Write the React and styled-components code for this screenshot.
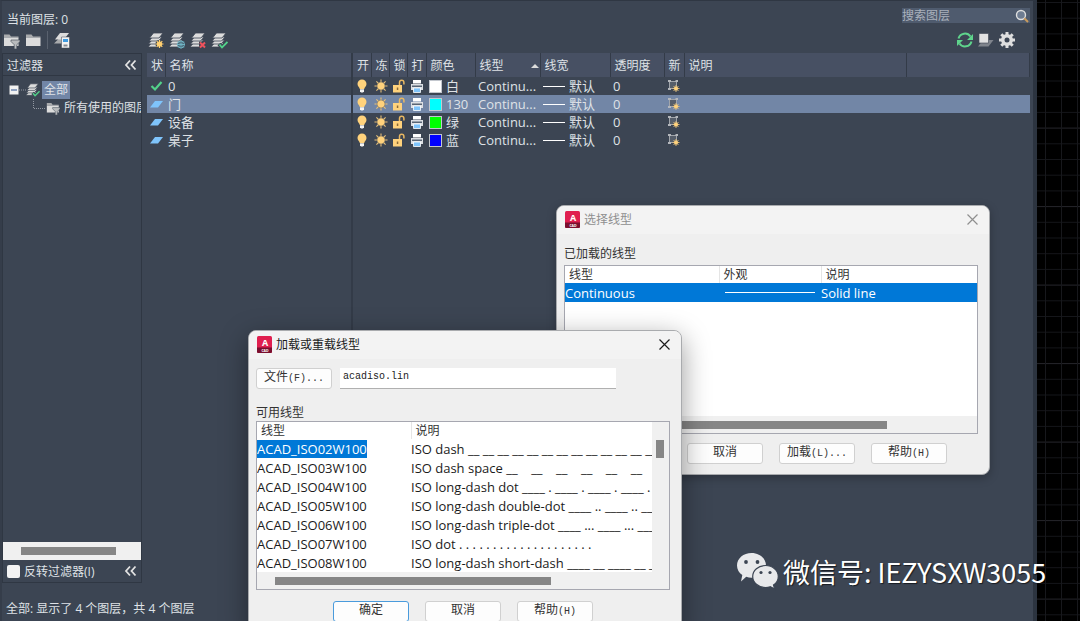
import React from 'react';
import styled, { createGlobalStyle } from 'styled-components';

const GlobalStyle = createGlobalStyle`
  * {
    box-sizing: border-box;
  }
  html, body, #root {
    height: 100%;
  }
  body {
    margin: 0;
    overflow: hidden;
    background: #000;
    font-family: 'Open Sans', 'Noto Sans CJK SC', sans-serif;
    font-size: 12px;
    color: #dfe2e6;
  }
  button, input {
    font: inherit;
    color: inherit;
  }
  svg {
    flex: none;
  }
`;

const Screen = styled.div`
  position: relative;
  display: flex;
  height: 100%;
  overflow: hidden;
`;

const Palette = styled.main`
  flex: 1;
  min-width: 0;
  display: flex;
  flex-direction: column;
  padding-right: 3px;
  background: #3c4553;
  border-top: 1px solid #2f3743;
  border-left: 2px solid #353d4a;
  border-right: 4px solid #2c3440;
`;

const DrawingArea = styled.svg`
  flex: none;
  width: 43px;
  height: 100%;
  background: #000;
`;

const TopBar = styled.header`
  display: flex;
  justify-content: space-between;
  align-items: flex-start;
  height: 29px;
  padding: 7px 0 0 5px;
  line-height: 24px;
`;

const SearchBox = styled.label`
  display: flex;
  align-items: center;
  width: 128px;
  height: 15px;
  background: #4f5b6e;
`;

const SearchInput = styled.input`
  flex: 1;
  min-width: 0;
  height: 15px;
  padding: 0;
  border: 0;
  outline: none;
  background: transparent;
  &::placeholder {
    color: #aab1bc;
    opacity: 1;
  }
`;

const Toolbar = styled.div`
  display: flex;
  align-items: center;
  height: 23px;
  padding: 0 0 3px 1px;
`;

const ToolGroup = styled.div`
  display: flex;
  align-items: center;
  gap: ${(props) => props.gap || 5}px;
  width: ${(props) => props.width || 'auto'};
  margin-left: ${(props) => props.end ? 'auto' : '0'};
  padding-right: ${(props) => props.end ? '14px' : '0'};
`;

const IconButton = styled.button`
  display: flex;
  padding: 0;
  border: 0;
  background: transparent;
  cursor: pointer;
`;

const Divider = styled.span`
  width: 1px;
  height: 18px;
  background: #59616e;
`;

const Body = styled.div`
  flex: 1;
  min-height: 0;
  display: flex;
  gap: 5px;
`;

const FilterPane = styled.aside`
  display: flex;
  flex-direction: column;
  width: 140px;
  border: 1px solid #2f3743;
`;

const FilterHeader = styled.div`
  display: flex;
  justify-content: space-between;
  align-items: center;
  height: 22px;
  padding: 0 4px;
  border-bottom: ${(props) => props.bottom ? '0' : '1px solid #2f3743'};
`;

const Tree = styled.div`
  flex: 1;
  overflow: hidden;
  padding-top: 5px;
`;

const TreeRow = styled.div`
  display: flex;
  align-items: center;
  height: 18px;
  padding-left: ${(props) => props.level ? 29 : 6}px;
  white-space: nowrap;
`;

const TreeLabel = styled.span`
  margin-left: 2px;
  padding: 0 2px;
  line-height: 18px;
  background: ${(props) => props.selected ? '#7286a6' : 'transparent'};
`;

const ScrollTrack = styled.div`
  display: flex;
  align-items: center;
  height: 18px;
  padding-left: 18px;
  background: #f0f0f0;
`;

const ScrollThumb = styled.div`
  width: ${(props) => props.size};
  height: 8px;
  background: #868686;
`;

const CheckLabel = styled.label`
  display: flex;
  align-items: center;
  gap: 4px;
`;

const CheckBox = styled.input`
  appearance: none;
  width: 13px;
  height: 13px;
  margin: 0;
  border-radius: 2px;
  background: #f3f3f3;
`;

const ListPane = styled.section`
  flex: 1;
  min-width: 0;
  display: flex;
  flex-direction: column;
`;

const LayerTable = styled.table`
  width: 100%;
  table-layout: fixed;
  border-collapse: collapse;
`;

const HeadCell = styled.th`
  height: 24px;
  padding: 0 0 0 4px;
  overflow: hidden;
  text-align: left;
  font-weight: normal;
  white-space: nowrap;
  background: #475063;
  border-right: ${(props) => props.edge ? 2 : 1}px solid #333b48;
`;

const SortHead = styled.div`
  display: flex;
  align-items: center;
  justify-content: space-between;
  padding-right: 1px;
`;

const LayerRow = styled.tr`
  background: ${(props) => props.selected ? '#7286a6' : 'transparent'};
`;

const Cell = styled.td`
  height: 18px;
  padding: 0 0 0 3px;
  overflow: hidden;
  white-space: nowrap;
  font-size: 13px;
  line-height: 16px;
  border-right: ${(props) => props.edge ? '2px solid #333b48' : '0'};
`;

const EmptyList = styled.div`
  flex: 1;
  width: 206px;
  border-right: 2px solid #333b48;
`;

const CellFlex = styled.div`
  display: flex;
  align-items: center;
  height: 18px;
  gap: ${(props) => props.gap || 0}px;
`;

const Swatch = styled.span`
  width: 13px;
  height: 13px;
  background: ${(props) => props.color};
  border: 1px solid #c3c7ce;
`;

const LineSample = styled.span`
  width: ${(props) => props.wide ? 90 : 22}px;
  height: 1px;
  background: #fff;
`;

const StatusBar = styled.footer`
  height: 38px;
  padding: 15px 0 0 4px;
  line-height: 22px;
`;

const Dialog = styled.section`
  position: absolute;
  left: ${(props) => props.x}px;
  top: ${(props) => props.y}px;
  width: 434px;
  overflow: hidden;
  color: #1b1b1b;
  background: #efefef;
  border: 1px solid #a9abae;
  border-radius: 8px;
  box-shadow: 0 ${(props) => props.active ? '8px 28px rgba(0, 0, 0, 0.4)' : '3px 10px rgba(0, 0, 0, 0.25)'};
`;

const TitleBar = styled.header`
  display: flex;
  align-items: center;
  gap: 4px;
  height: 28px;
  padding: 0 10px 2px 8px;
  color: ${(props) => props.active ? '#1b1b1b' : '#8f8f8f'};
  background: #f3f3f3;
`;

const Title = styled.h2`
  flex: 1;
  margin: 0;
  font-size: 12px;
  font-weight: normal;
`;

const DialogBody = styled.div`
  padding: 9px 11px 10px 7px;
`;

const FileRow = styled.div`
  display: flex;
  gap: 8px;
  margin-bottom: 13px;
`;

const DialogButton = styled.button`
  width: 76px;
  height: 21px;
  padding: 0;
  color: #333;
  font-family: 'Liberation Mono', 'Noto Sans CJK SC', monospace;
  font-size: 12px;
  line-height: 19px;
  background: #fdfdfd;
  border: 1px solid ${(props) => props.primary ? '#4a9bdc' : '#d0d0d0'};
  border-radius: 3px;
`;

const Latin = styled.span`
  font-size: 10px;
`;

const FileInput = styled.input`
  width: 276px;
  height: 21px;
  padding: 0 3px 3px;
  color: #222;
  font-family: 'Liberation Mono', monospace;
  font-size: 10px;
  background: #fff;
  border: 0;
  border-bottom: 1px solid #b0b0b0;
`;

const FieldLabel = styled.div`
  height: ${(props) => props.tight ? 19 : 22}px;
  color: #333;
  line-height: 21px;
`;

const ListBox = styled.div`
  background: #fff;
  border: 1px solid #a6a7b0;
`;

const ListArea = styled.div`
  display: flex;
  height: 150px;
`;

const ListView = styled.div`
  flex: 1;
  min-width: 0;
  overflow: hidden;
`;

const TypeTable = styled.table`
  width: 100%;
  table-layout: fixed;
  border-collapse: collapse;
  font-size: 13px;
`;

const TypeHead = styled.th`
  height: 17px;
  padding: 0 0 0 4px;
  color: #333;
  text-align: left;
  font-size: 12px;
  font-weight: normal;
  line-height: 16px;
  border-right: ${(props) => props.last ? '0' : '1px solid #e5e5e5'};
`;

const TypeRow = styled.tr`
  color: ${(props) => props.selected ? '#fff' : 'inherit'};
  background: ${(props) => props.selected ? '#0078d7' : 'transparent'};
`;

const TypeCell = styled.td`
  height: 19px;
  padding: 0;
  overflow: hidden;
  line-height: 18px;
  white-space: pre;
`;

const TypeName = styled.span`
  display: inline-block;
  color: ${(props) => props.selected ? '#fff' : 'inherit'};
  background: ${(props) => props.selected ? '#0078d7' : 'transparent'};
`;

const Appearance = styled(CellFlex)`
  padding-left: 6px;
`;

const VerticalTrack = styled.div`
  width: 17px;
  padding: 18px 0 0 4px;
  background: #f0f0f0;
`;

const VerticalThumb = styled.div`
  width: 8px;
  height: 18px;
  background: #868686;
`;

const ListTrack = styled(ScrollTrack)`
  height: 17px;
`;

const ButtonRow = styled.div`
  display: flex;
  gap: 16px;
  padding-top: ${(props) => props.top}px;
  padding-left: ${(props) => props.indent}px;
`;

const Watermark = styled.div`
  position: absolute;
  left: 736px;
  top: 552px;
  display: flex;
  align-items: center;
  gap: 4px;
  color: #fff;
  font-family: 'Noto Sans CJK SC', sans-serif;
  font-size: 27px;
  line-height: 40px;
  white-space: nowrap;
  text-shadow: 1px 1px 1px rgba(0, 0, 0, 0.6);
`;

const layers = [
  { name: '0', current: true, color: '#fff', colorName: '白' },
  { name: '门', selected: true, color: '#0ff', colorName: '130' },
  { name: '设备', color: '#0f0', colorName: '绿' },
  { name: '桌子', color: '#00f', colorName: '蓝' },
];

const lineTypes = [
  ['ACAD_ISO02W100', 'ISO dash __ __ __ __ __ __ __ __ __ __ __ __ __'],
  ['ACAD_ISO03W100', 'ISO dash space __    __    __    __    __    __'],
  ['ACAD_ISO04W100', 'ISO long-dash dot ____ . ____ . ____ . ____ . _'],
  ['ACAD_ISO05W100', 'ISO long-dash double-dot ____ .. ____ .. ____ . '],
  ['ACAD_ISO06W100', 'ISO long-dash triple-dot ____ ... ____ ... ____'],
  ['ACAD_ISO07W100', 'ISO dot . . . . . . . . . . . . . . . . . . . . '],
  ['ACAD_ISO08W100', 'ISO long-dash short-dash ____ __ ____ __ ____ _'],
];

const Sheets = () => (
  <g fill="#dcdcdc" stroke="#3c4553" strokeWidth="0.8">
    <path d="M0 15 3.500 11H13l-3.500 4z" />
    <path d="M.5 12 4 8h9.500L10 12z" />
    <path d="M1 9 4.500 5H14l-3.500 4z" />
    <path d="M1.500 6 5.500 1H15l-4 5z" />
  </g>
);

const LayersIcon = ({ mark, size = 17 }) => (
  <svg width={size} height={size} viewBox="0 0 17 17">
    <Sheets />
    {mark === 'sun' && (
      <g stroke="#ffcf70" strokeWidth="1.200">
        <circle cx="11.500" cy="12" r="4" fill="#3c4553" stroke="none" />
        <path d="M11.500 8v8M7.500 12h8M8.700 9.200l5.600 5.600M14.300 9.200l-5.600 5.600" />
        <circle cx="11.500" cy="12" r="2" fill="#ffcf70" />
      </g>
    )}
    {mark === 'freeze' && (
      <g fill="none" stroke="#6fb3c4" strokeWidth="1">
        <circle cx="12" cy="12.500" r="3.500" fill="#3c4553" />
        <path d="M12 8.500v8M8 12.500h8M9.200 9.700l5.600 5.600M14.800 9.700l-5.600 5.600" />
      </g>
    )}
    {mark === 'delete' && (
      <g>
        <path d="M9 9.500h7v7H9z" fill="#3c4553" />
        <path d="M10 10.500l5 5M15 10.500l-5 5" stroke="#f0525c" strokeWidth="2" />
      </g>
    )}
    {mark === 'check' && (
      <g fill="none">
        <path d="M8 12l3 3.500 5.500-5.500" stroke="#3c4553" strokeWidth="4" />
        <path d="M8.500 12.500l2.500 3 5.500-5.500" stroke="#53d28a" strokeWidth="1.800" />
      </g>
    )}
  </svg>
);

const FolderIcon = ({ filter, size = 17 }) => (
  <svg width={size} height={size} viewBox="0 0 17 17">
    <path d="M1 2.500h5.500L8 4.500h7.500v1H1z" fill="#a9abad" />
    <path d="M1 5.500h14.500v8.500H1z" fill="#dcdcdc" />
    {filter && <path d="M8 8h9v1.500l-3.200 3.200V17h-2.600v-4.300L8 9.500z" fill="#b9bbbd" stroke="#3c4553" strokeWidth="0.6" />}
  </svg>
);

const StateIcon = () => (
  <svg width="18" height="18" viewBox="0 0 18 18">
    <path d="M1 12.500 5.500 8H14l-4.500 4.500z" fill="#a9abad" />
    <path d="M2 8.500 7 2h9l-5 6.500z" fill="#dcdcdc" />
    <path d="M8.500 6h8v11h-8z" fill="#f3f3f3" stroke="#3c4553" strokeWidth="0.5" />
    <path d="M10 8h5v3h-5z" fill="#3f9be0" />
    <path d="M10.500 13.500h4v2h-4z" fill="#858a91" />
  </svg>
);

const Chevrons = () => (
  <svg width="13" height="12" viewBox="0 0 13 12">
    <path d="M6 1.500 2 6l4 4.500M11.500 1.500l-4 4.500 4 4.500" fill="none" stroke="#e3e3e3" strokeWidth="1.800" />
  </svg>
);

const SearchIcon = () => (
  <svg width="16" height="14" viewBox="0 0 16 14">
    <circle cx="7" cy="6" r="4.500" fill="#6e7c91" stroke="#dedede" strokeWidth="1.400" />
    <path d="M10.300 9.300 14 13" stroke="#c99b5d" strokeWidth="2" />
  </svg>
);

const RefreshIcon = () => (
  <svg width="18" height="16" viewBox="0 0 18 16">
    <path d="M2.500 6.500A6.700 6.700 0 0 1 14.500 4.500M15.500 9.500A6.700 6.700 0 0 1 3.500 11.500" fill="none" stroke="#5fd48c" strokeWidth="2" />
    <path d="M17 2v6h-6zM1 14V8h6z" fill="#5fd48c" />
  </svg>
);

const OverrideIcon = () => (
  <svg width="16" height="16" viewBox="0 0 16 16">
    <path d="M0 14.500 5 8h10.500l-5 6.500z" fill="#7f848c" />
    <path d="M1 1.500h9.500V11H1z" fill="#e2e2e2" stroke="#3c4553" strokeWidth="0.6" />
  </svg>
);

const GearIcon = () => (
  <svg width="18" height="18" viewBox="0 0 18 18">
    <g stroke="#dedede" strokeWidth="3">
      <path d="M9 1v16M1 9h16M3.300 3.300l11.400 11.400M14.700 3.300 3.300 14.700" />
    </g>
    <circle cx="9" cy="9" r="6" fill="#dedede" />
    <circle cx="9" cy="9" r="2.500" fill="#3c4553" />
  </svg>
);

const CheckIcon = () => (
  <svg width="13" height="12" viewBox="0 0 13 12">
    <path d="M1.500 6 5 9.500 11.500 2" fill="none" stroke="#53d28a" strokeWidth="2.200" />
  </svg>
);

const LayerIcon = () => (
  <svg width="13" height="12" viewBox="0 0 13 12">
    <path d="M0 9.500 5 3h8L8 9.500z" fill="#7fc4fb" />
  </svg>
);

const BulbIcon = () => (
  <svg width="12" height="14" viewBox="0 0 12 14">
    <path d="M6 .5a4.500 4.500 0 0 1 4.500 4.500C10.500 7.500 8.500 8 8.200 10H3.800C3.500 8 1.500 7.500 1.500 5A4.500 4.500 0 0 1 6 .5z" fill="#ffd27c" />
    <path d="M4 10.300h4v2L7 13.500H5l-1-1.200z" fill="#f4f4f4" />
  </svg>
);

const SunIcon = () => (
  <svg width="14" height="14" viewBox="0 0 14 14">
    <path d="M7 .5v13M.5 7h13M2.400 2.400l9.200 9.200M11.600 2.400l-9.200 9.200" stroke="#e9c27a" strokeWidth="1.100" />
    <circle cx="7" cy="7" r="4" fill="#ffd27c" stroke="#3c4553" strokeWidth="0.4" />
  </svg>
);

const LockIcon = () => (
  <svg width="13" height="14" viewBox="0 0 13 14">
    <path d="M7.500 6V3.500a2.200 2.200 0 0 1 4.400 0V5.500" fill="none" stroke="#e9b862" strokeWidth="1.500" />
    <path d="M1 6h9v7.500H1z" fill="#ffd27c" />
    <path d="M4.800 8.500h1.500v2.500H4.800z" fill="#8a6a38" />
  </svg>
);

const PrinterIcon = () => (
  <svg width="14" height="14" viewBox="0 0 14 14">
    <path d="M3 1h8v3.500H3z" fill="#fff" />
    <path d="M1 5h12v6H1z" fill="#dcdfe3" />
    <path d="M2 6.500h10v1.500H2z" fill="#596575" />
    <path d="M3.500 9h7v4.500h-7z" fill="#7fc4fb" stroke="#fff" strokeWidth="0.8" />
  </svg>
);

const ViewportIcon = () => (
  <svg width="13" height="14" viewBox="0 0 13 14">
    <path d="M2.500 2.500h7v7h-7z" fill="#565e6a" stroke="#a0a4aa" />
    <path d="M1 1h3v2H1zM8.500 1h2.500v2H8.500zM1 9h3v2H1z" fill="#b4b7bc" />
    <path d="M9 6v7M5.500 9.500h7M6.500 7l5 5M11.500 7l-5 5" stroke="#e9c27a" strokeWidth="0.9" />
    <circle cx="9" cy="9.500" r="2" fill="#ffd27c" />
  </svg>
);

const AppIcon = () => (
  <svg width="15" height="17" viewBox="0 0 15 17">
    <rect width="15" height="17" rx="1.500" fill="#e01f4f" />
    <path d="M0 11.500h15v4a1.500 1.500 0 0 1-1.500 1.500h-12A1.500 1.500 0 0 1 0 15.500z" fill="#7b0f2f" />
    <text x="8" y="9.500" textAnchor="middle" fontSize="9" fontWeight="bold" fill="#fff">A</text>
    <text x="8" y="15.500" textAnchor="middle" fontSize="3.500" fontWeight="bold" fill="#fff">CAD</text>
  </svg>
);

const CloseIcon = () => (
  <svg width="13" height="13" viewBox="0 0 13 13">
    <path d="M1.500 1.500l10 10M11.500 1.500l-10 10" stroke="currentColor" strokeWidth="1.200" />
  </svg>
);

const WeChatIcon = () => (
  <svg width="43" height="40" viewBox="0 2 43 40">
    <path d="M15.500 3C7.500 3 1 8.400 1 15.500c0 4 2 7.300 5.300 9.600L5 31.500l5.200-4.700c1.800.6 3.500.9 5.300.9 8 0 14.500-5.200 14.500-12.200S23.500 3 15.500 3z" fill="#e8e9eb" />
    <path d="M29.500 15.500c-7.200 0-12.800 4.900-12.800 11s5.600 11 12.800 11c1.700 0 3.300-.3 4.700-.8l4.500 2.300-1.200-3.900c3-2 4.800-5 4.800-8.600 0-6.100-5.600-11-12.800-11z" fill="#e8e9eb" stroke="#3c4553" strokeWidth="1.200" />
    <g fill="#3c4553">
      <circle cx="10" cy="12" r="1.900" />
      <circle cx="21.500" cy="12" r="1.900" />
      <circle cx="25" cy="22.500" r="1.600" />
      <circle cx="34" cy="22.500" r="1.600" />
    </g>
  </svg>
);

const GridLines = () => (
  <DrawingArea>
    {Array.from({ length: 40 }, (_, i) => (
      <path key={i} d={`M0 ${2.5 + i * 15.7}h43`} stroke={i % 5 === 3 ? '#26262c' : '#15161a'} />
    ))}
    <path d="M8.500 0v2000M24.500 0v2000M40.500 0v2000" stroke="#17181c" />
  </DrawingArea>
);

const FilterPanel = () => (
  <FilterPane>
    <FilterHeader>
      过滤器
      <IconButton aria-label="折叠过滤器"><Chevrons /></IconButton>
    </FilterHeader>
    <Tree>
      <TreeRow>
        <svg width="17" height="14" viewBox="0 0 17 14">
          <path d="M.5 2.500h9v9h-9z" fill="#f2f2f2" />
          <path d="M2 7h6" stroke="#4a6ba0" strokeWidth="1.200" />
          <path d="M10 7h7" stroke="#9298a2" strokeDasharray="1 1" />
        </svg>
        <LayersIcon mark="check" size={14} />
        <TreeLabel selected>全部</TreeLabel>
      </TreeRow>
      <TreeRow level={1}>
        <svg width="14" height="18" viewBox="0 0 14 18">
          <path d="M1.500 0v9.500H13" fill="none" stroke="#9298a2" strokeDasharray="1 1" />
        </svg>
        <FolderIcon filter size={14} />
        <TreeLabel>所有使用的图层</TreeLabel>
      </TreeRow>
    </Tree>
    <ScrollTrack>
      <ScrollThumb size="95px" />
    </ScrollTrack>
    <FilterHeader bottom>
      <CheckLabel>
        <CheckBox type="checkbox" />
        反转过滤器(I)
      </CheckLabel>
      <IconButton aria-label="折叠"><Chevrons /></IconButton>
    </FilterHeader>
  </FilterPane>
);

const columnWidths = [18, 187, 19, 18, 18, 19, 49, 65, 70, 54, 20, 222];

const LayerList = () => (
  <ListPane>
    <LayerTable>
      <colgroup>
        {columnWidths.map((width, i) => <col key={i} width={width} />)}
        <col />
      </colgroup>
      <thead>
        <tr>
          <HeadCell>状</HeadCell>
          <HeadCell edge>名称</HeadCell>
          <HeadCell>开</HeadCell>
          <HeadCell>冻</HeadCell>
          <HeadCell>锁</HeadCell>
          <HeadCell>打</HeadCell>
          <HeadCell>颜色</HeadCell>
          <HeadCell>
            <SortHead>
              线型
              <svg width="8" height="5" viewBox="0 0 8 5"><path d="M0 5 4 1l4 4z" fill="#dcdcdc" /></svg>
            </SortHead>
          </HeadCell>
          <HeadCell>线宽</HeadCell>
          <HeadCell>透明度</HeadCell>
          <HeadCell>新</HeadCell>
          <HeadCell>说明</HeadCell>
          <HeadCell />
        </tr>
      </thead>
      <tbody>
        {layers.map((layer) => (
          <LayerRow key={layer.name} selected={layer.selected}>
            <Cell><CellFlex>{layer.current ? <CheckIcon /> : <LayerIcon />}</CellFlex></Cell>
            <Cell edge>{layer.name}</Cell>
            <Cell><CellFlex><BulbIcon /></CellFlex></Cell>
            <Cell><CellFlex><SunIcon /></CellFlex></Cell>
            <Cell><CellFlex><LockIcon /></CellFlex></Cell>
            <Cell><CellFlex><PrinterIcon /></CellFlex></Cell>
            <Cell>
              <CellFlex gap={4}>
                <Swatch color={layer.color} />
                {layer.colorName}
              </CellFlex>
            </Cell>
            <Cell>Continu...</Cell>
            <Cell>
              <CellFlex gap={4}>
                <LineSample />
                默认
              </CellFlex>
            </Cell>
            <Cell>0</Cell>
            <Cell><CellFlex><ViewportIcon /></CellFlex></Cell>
            <Cell />
            <Cell />
          </LayerRow>
        ))}
      </tbody>
    </LayerTable>
    <EmptyList />
  </ListPane>
);

const SelectLinetype = () => (
  <Dialog x={556} y={205} aria-label="选择线型">
    <TitleBar>
      <AppIcon />
      <Title>选择线型</Title>
      <IconButton aria-label="关闭"><CloseIcon /></IconButton>
    </TitleBar>
    <DialogBody>
      <FieldLabel>已加载的线型</FieldLabel>
      <ListBox>
        <ListArea>
          <ListView>
            <TypeTable>
              <colgroup>
                <col width="154" />
                <col width="102" />
                <col />
              </colgroup>
              <thead>
                <tr>
                  <TypeHead>线型</TypeHead>
                  <TypeHead>外观</TypeHead>
                  <TypeHead last>说明</TypeHead>
                </tr>
              </thead>
              <tbody>
                <TypeRow selected>
                  <TypeCell>Continuous</TypeCell>
                  <TypeCell><Appearance><LineSample wide /></Appearance></TypeCell>
                  <TypeCell>Solid line</TypeCell>
                </TypeRow>
              </tbody>
            </TypeTable>
          </ListView>
        </ListArea>
        <ListTrack>
          <ScrollThumb size="304px" />
        </ListTrack>
      </ListBox>
      <ButtonRow top={9} indent={31}>
        <DialogButton aria-label="确定" />
        <DialogButton>取消</DialogButton>
        <DialogButton>加载<Latin>(L)...</Latin></DialogButton>
        <DialogButton>帮助<Latin>(H)</Latin></DialogButton>
      </ButtonRow>
    </DialogBody>
  </Dialog>
);

const LoadLinetypes = () => (
  <Dialog active x={248} y={330} aria-label="加载或重载线型">
    <TitleBar active>
      <AppIcon />
      <Title>加载或重载线型</Title>
      <IconButton aria-label="关闭"><CloseIcon /></IconButton>
    </TitleBar>
    <DialogBody>
      <FileRow>
        <DialogButton>文件<Latin>(F)...</Latin></DialogButton>
        <FileInput aria-label="文件" defaultValue="acadiso.lin" />
      </FileRow>
      <FieldLabel tight>可用线型</FieldLabel>
      <ListBox>
        <ListArea>
          <ListView>
            <TypeTable>
              <colgroup>
                <col width="154" />
                <col />
              </colgroup>
              <thead>
                <tr>
                  <TypeHead>线型</TypeHead>
                  <TypeHead last>说明</TypeHead>
                </tr>
              </thead>
              <tbody>
                {lineTypes.map(([name, description], i) => (
                  <TypeRow key={name}>
                    <TypeCell><TypeName selected={i === 0}>{name}</TypeName></TypeCell>
                    <TypeCell>{description}</TypeCell>
                  </TypeRow>
                ))}
              </tbody>
            </TypeTable>
          </ListView>
          <VerticalTrack><VerticalThumb /></VerticalTrack>
        </ListArea>
        <ListTrack>
          <ScrollThumb size="276px" />
        </ListTrack>
      </ListBox>
      <ButtonRow top={11} indent={77}>
        <DialogButton primary>确定</DialogButton>
        <DialogButton>取消</DialogButton>
        <DialogButton>帮助<Latin>(H)</Latin></DialogButton>
      </ButtonRow>
    </DialogBody>
  </Dialog>
);

const App = () => {
  return (
    <Screen>
      <GlobalStyle />
      <Palette>
        <TopBar>
          <span>当前图层: 0</span>
          <SearchBox>
            <SearchInput aria-label="搜索图层" placeholder="搜索图层" />
            <SearchIcon />
          </SearchBox>
        </TopBar>
        <Toolbar>
          <ToolGroup width="145px">
            <IconButton aria-label="新建特性过滤器"><FolderIcon filter /></IconButton>
            <IconButton aria-label="新建组过滤器"><FolderIcon /></IconButton>
            <Divider />
            <IconButton aria-label="图层状态管理器"><StateIcon /></IconButton>
          </ToolGroup>
          <ToolGroup gap={4}>
            <IconButton aria-label="新建图层"><LayersIcon mark="sun" /></IconButton>
            <IconButton aria-label="新建冻结图层"><LayersIcon mark="freeze" /></IconButton>
            <IconButton aria-label="删除图层"><LayersIcon mark="delete" /></IconButton>
            <IconButton aria-label="置为当前"><LayersIcon mark="check" /></IconButton>
          </ToolGroup>
          <ToolGroup end gap={4}>
            <IconButton aria-label="刷新"><RefreshIcon /></IconButton>
            <IconButton aria-label="替代"><OverrideIcon /></IconButton>
            <IconButton aria-label="设置"><GearIcon /></IconButton>
          </ToolGroup>
        </Toolbar>
        <Body>
          <FilterPanel />
          <LayerList />
        </Body>
        <StatusBar>全部: 显示了 4 个图层，共 4 个图层</StatusBar>
      </Palette>
      <GridLines />
      <SelectLinetype />
      <LoadLinetypes />
      <Watermark>
        <WeChatIcon />
        <span>微信号: IEZYSXW3055</span>
      </Watermark>
    </Screen>
  );
};

export default App;
